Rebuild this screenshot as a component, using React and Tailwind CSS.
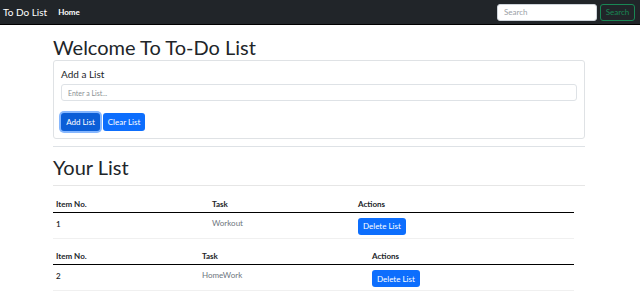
import React from "react";

const lists = [
  { id: 1, task: "Workout", cols: ["w-[156px]", "w-[146px]"] },
  { id: 2, task: "HomeWork", cols: ["w-[146px]", "w-[170px]"] },
];

function ListTable({ item }) {
  return (
    <table className="w-[521px] table-fixed border-collapse text-[8px] mb-[6px]">
      <colgroup>
        <col className={item.cols[0]} />
        <col className={item.cols[1]} />
        <col />
      </colgroup>
      <thead>
        <tr className="border-b border-black">
          <th className="text-left font-bold px-[3px] h-[20px] pt-[4px] align-middle">Item No.</th>
          <th className="text-left font-bold px-[3px] align-middle pt-[4px]">Task</th>
          <th className="text-left font-bold px-[3px] align-middle pt-[4px]">Actions</th>
        </tr>
      </thead>
      <tbody>
        <tr className="border-b border-[#f0f0f0]">
          <th className="text-left font-semibold px-[3px] pt-[5px] align-top">{item.id}</th>
          <td className="px-[3px] pt-[4px] align-top text-[#6c757d]">{item.task}</td>
          <td className="px-[3px] pt-[5px] pb-[3px] align-top">
            <button className="h-[17px] px-[5px] rounded-[3px] bg-[#0d6efd] text-white text-[8px]">
              Delete List
            </button>
          </td>
        </tr>
      </tbody>
    </table>
  );
}

export default function App() {
  return (
    <div className="min-h-[295px] bg-white font-['Lato',sans-serif] text-[#212529]">
      <nav className="h-[25px] bg-[#212529] border-b border-black flex items-center justify-between pl-[3px] pr-[5px]">
        <div className="flex items-center">
          <span className="text-white text-[10px]">To Do List</span>
          <a className="ml-[11px] text-white text-[8px] font-bold">Home</a>
        </div>
        <div className="flex items-center gap-[3px]">
          <input
            placeholder="Search"
            className="block w-[100px] h-[17px] rounded-[3px] bg-white px-[6px] text-[8px] border border-[#ced4da] placeholder:text-[#9aa0a6] outline-none"
          />
          <button className="w-[35px] h-[17px] rounded-[3px] border border-[#198754] text-[#198754] text-[8px]">
            Search
          </button>
        </div>
      </nav>

      <main className="w-[532px] ml-[53px]">
        <h1 className="text-[20px] leading-[24px] mt-[10px] mb-[1px]">Welcome To To-Do List</h1>

        <div className="border border-[#dfe2e5] rounded-[3px] px-[7px] pt-[7px] pb-[7px]">
          <h5 className="text-[10px] leading-[12px] mb-[4px]">Add a List</h5>
          <input
            placeholder="Enter a List..."
            className="block w-full h-[17px] rounded-[3px] border border-[#dee2e6] px-[6px] text-[7px] placeholder:text-[#8a8f94] outline-none"
          />
          <div className="flex gap-[3px] mt-[12px]">
            <button className="h-[18px] w-[39px] rounded-[3px] bg-[#0b5ed7] text-white text-[8px] ring-2 ring-[#86b7fe]">
              Add List
            </button>
            <button className="h-[18px] w-[42px] rounded-[3px] bg-[#0d6efd] text-white text-[8px]">
              Clear List
            </button>
          </div>
        </div>

        <hr className="mt-[7px] border-[#dee2e6]" />
        <h2 className="text-[20px] leading-[24px] mt-[8px] mb-[6px]">Your List</h2>
        <hr className="border-[#e6e6e6] mb-[6px]" />

        {lists.map((item) => (
          <ListTable key={item.id} item={item} />
        ))}
      </main>
    </div>
  );
}
